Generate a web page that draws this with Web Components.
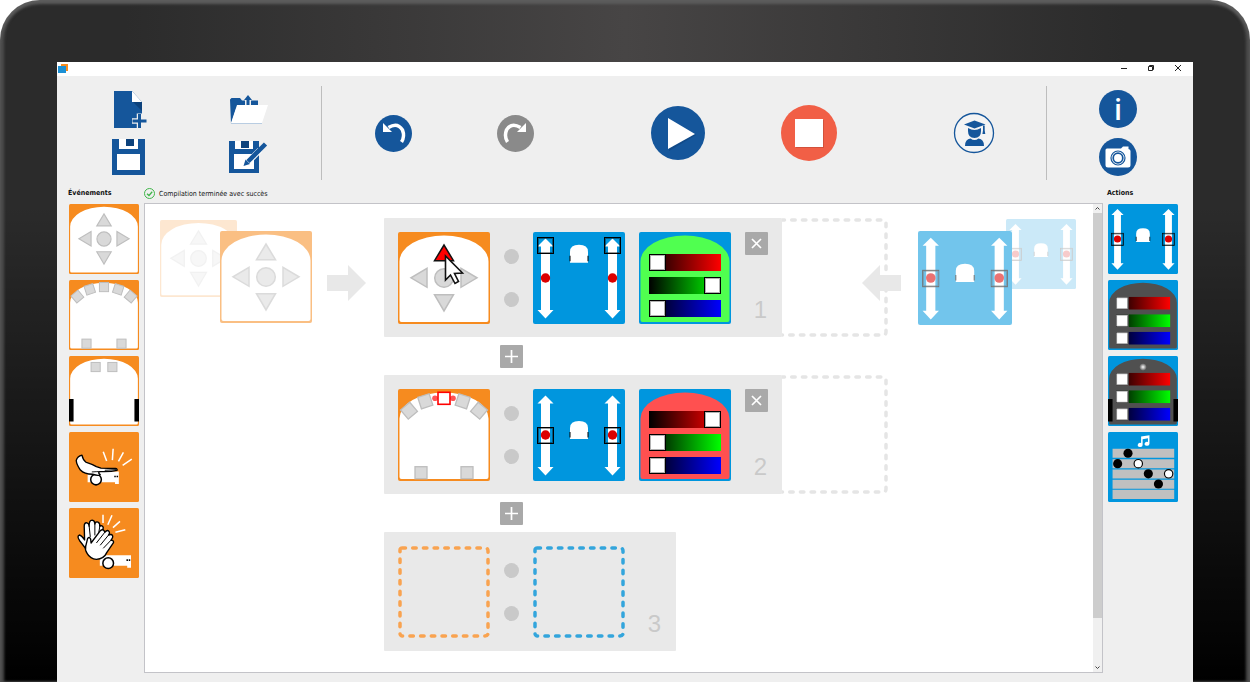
<!DOCTYPE html>
<html lang="fr">
<head>
<meta charset="utf-8">
<title>Thymio VPL</title>
<style>
  body {
    margin: 0;
    background: #fff;
    color: #111;
    font-family: "DejaVu Sans Condensed", "DejaVu Sans", sans-serif;
  }
</style>
</head>
<body>

<vpl-device>
  <vpl-window>
    <vpl-toolbar slot="toolbar">
      <vpl-tool slot="files" icon="new" label="Nouveau"></vpl-tool>
      <vpl-tool slot="files" icon="open" label="Ouvrir"></vpl-tool>
      <vpl-tool slot="files" icon="save" label="Enregistrer"></vpl-tool>
      <vpl-tool slot="files" icon="saveas" label="Enregistrer sous"></vpl-tool>
      <vpl-tool slot="history" icon="undo" label="Annuler"></vpl-tool>
      <vpl-tool slot="history" icon="redo" label="Rétablir"></vpl-tool>
      <vpl-tool slot="run" icon="play" label="Lancer"></vpl-tool>
      <vpl-tool slot="run" icon="stop" label="Arrêter"></vpl-tool>
      <vpl-tool slot="mode" icon="advanced" label="Mode avancé"></vpl-tool>
      <vpl-tool slot="help" icon="info" label="Aide"></vpl-tool>
      <vpl-tool slot="help" icon="camera" label="Capture"></vpl-tool>
    </vpl-toolbar>

    <vpl-palette slot="events" heading="Événements">
      <vpl-block type="buttons"></vpl-block>
      <vpl-block type="prox"></vpl-block>
      <vpl-block type="ground"></vpl-block>
      <vpl-block type="tap"></vpl-block>
      <vpl-block type="clap"></vpl-block>
    </vpl-palette>

    <vpl-status slot="status">Compilation terminée avec succès</vpl-status>

    <vpl-canvas slot="canvas">
      <vpl-hint slot="before">
        <vpl-block type="buttons" class="far"></vpl-block>
        <vpl-block type="buttons" class="near"></vpl-block>
      </vpl-hint>

      <vpl-rule number="1" extend>
        <vpl-block slot="event" type="buttons" active pointer></vpl-block>
        <vpl-block slot="action" type="motors" speed="100"></vpl-block>
        <vpl-block slot="action" type="color" rgb="0,100,0" fill="#50ff50"></vpl-block>
      </vpl-rule>
      <vpl-add></vpl-add>
      <vpl-rule number="2" extend>
        <vpl-block slot="event" type="prox" active></vpl-block>
        <vpl-block slot="action" type="motors"></vpl-block>
        <vpl-block slot="action" type="color" rgb="100,0,0" fill="#ff5050"></vpl-block>
      </vpl-rule>
      <vpl-add></vpl-add>
      <vpl-rule number="3"></vpl-rule>

      <vpl-hint slot="after" reverse>
        <vpl-block type="motors" class="near"></vpl-block>
        <vpl-block type="motors" class="far"></vpl-block>
      </vpl-hint>
    </vpl-canvas>

    <vpl-palette slot="actions" heading="Actions" class="right">
      <vpl-block type="motors"></vpl-block>
      <vpl-block type="color"></vpl-block>
      <vpl-block type="colorbottom"></vpl-block>
      <vpl-block type="music"></vpl-block>
    </vpl-palette>
  </vpl-window>
</vpl-device>

<script>
const BLUE = '#15569b'
const ORANGE = '#f68b1f'
const SKY = '#0096de'

/* ---------- small drawing helpers, all on a 92 x 92 grid ---------- */

const ARCH = 'M1.5 29.5A44.5 26 0 0 1 90.5 29.5V88a2 2 0 0 1-2 2H3.5a2 2 0 0 1-2-2Z'
const base = (bg, body) => `<rect width="92" height="92" rx="2" fill="${bg}"/>${body ? `<path d="${ARCH}" fill="${body}"/>` : ''}`
const box = (x, y, turn = 0) => `<rect x="-6" y="-6" width="12" height="12" transform="translate(${x} ${y}) rotate(${turn})"/>`
const wheels = '<path d="M0 56.5h6V86H0ZM86 56.5h6V86h-6Z" fill="#000"/>'
const lines = d => `<path d="${d}" stroke="#fff" stroke-width="2" fill="none"/>`
const robot = (x, y) => `<g transform="translate(${x} ${y})">
  <path d="M0 0H41V16.500H36V14H0Z" fill="#fff"/>
  <path d="M35 5.500h2v2h-2zM38 5.500h2v2h-2z"/>
  <circle cx="11" cy="10.500" r="7" fill="#fff" stroke="#000" stroke-width="2"/></g>`

const slider = (name, value, from, y) => `
  <foreignObject x="10" y="${y}" width="72" height="17">
    <input type="range" aria-label="${name}" value="${value}" style="--tint:${from}">
  </foreignObject>`
const sliders = rgb => slider('Rouge', rgb[0], '#f00', 21.5) + slider('Vert', rgb[1], '#0f0', 44.5) + slider('Bleu', rgb[2], '#00f', 67.5)

const motorArrow = x => `<path transform="translate(${x} 0)" fill="#fff" d="M0 6.500L8 14.500H4.500V78H8L0 86.500L-8 78H-4.500V14.500H-8Z"/>
  <circle cx="${x}" cy="46" r="4.700" fill="#dc0000"/>`
const motorSlider = (name, x, value) => `
  <foreignObject x="${x}" y="5" width="17" height="82">
    <input type="range" class="vertical" aria-label="${name}" min="-100" max="100" value="${value}">
  </foreignObject>`

const drawings = {
  buttons: el => base(ORANGE, '#fff') + `
    <g fill="#d9d9d9" stroke="#bebebe" stroke-width="1.500">
      <path d="M36.500 62.700h19L46 79Z"/>
      <path d="M29 36.300v19L13 45.800Z"/>
      <path d="M63 36.300v19L79 45.800Z"/>
      <circle cx="46" cy="46" r="9.300"/>
      <path d="M36.500 28.700h19L46 13Z" ${el.hasAttribute('active') ? 'fill="#f00" stroke="#111"' : ''}/>
    </g>`,

  prox: el => base(ORANGE, '#fff') + `
    <g fill="#d9d9d9" stroke="#bebebe" stroke-width="1.300">
      ${box(11, 21.7, -40)}${box(27.3, 12.3, -18)}${box(64.7, 12.3, 18)}${box(81, 21.7, 40)}
      ${box(23, 83.7)}${box(69, 83.7)}
      ${el.hasAttribute('active')
        ? `<g fill="#f55" stroke="none"><circle cx="37" cy="9.300" r="2.800"/><circle cx="55" cy="9.300" r="2.800"/></g><g fill="#fff" stroke="#f00" stroke-width="1.600">${box(46, 9.3)}</g>`
        : box(46, 9.3)}
    </g>`,

  ground: () => base(ORANGE, '#fff') + `
    <g fill="#d9d9d9" stroke="#bebebe" stroke-width="1.300">${box(35, 14.5)}${box(57, 14.5)}</g>` + wheels,

  tap: () => base(ORANGE) + robot(24.5, 52) +
    lines('M45 26L49.500 38M58 22L57 37M71.500 26.700L65 38.500M82.500 35.500L70.500 44') + `
    <path fill="#fff" stroke="#000" stroke-width="1.800" stroke-linejoin="round"
      d="M17 30.500Q18.500 37 22 39.500Q30 42 36 45.500L42 47.500L61 48Q64 48.500 63 50.500Q55 52.500 41 52Q37 53 41 56Q39 58 31 55.500Q20 55.500 15 50Q10 43 9.500 37.500Q11 32 17 30.500Z"/>
    <path fill="none" stroke="#000" stroke-width="1.200" d="M47 50.300L62 49.500M30 52.500Q36 52 41 52"/>`,

  clap: () => base(ORANGE) + robot(40.5, 62) +
    lines('M44.700 9V19.700M56.500 9.600L51 22M67 17.500L57.800 25.800M74 28.500L61 32') + `
    <g fill="#fff" stroke="#000" stroke-width="1.800" stroke-linejoin="round">
      <path d="M24 56L14 43Q10 37 13.500 35.500Q16.500 36 20.500 42L20 24Q20 19 23.500 19.500Q26 20 26.500 24Q26 16 30.500 16Q34 16.500 34 21Q35 17.500 38 18.500Q41 20 40.500 24Q44 22 45 25.500L43 40L34 56Z"/>
      <path d="M26.500 24L28 38M34 21V36M40.500 24L39 33" stroke-width="1.300"/>
      <path d="M22 50L24.500 40Q27 37 28.500 41L29 46L41 30Q44.500 27 46.500 30.500L47 32Q51 27.500 53 31.500Q54 33 52 35.500Q56.500 33.500 57.500 37Q58 39 55 42.500Q59 42 58.500 45.500L50 58Q46 67 36 67.500Q28 67 24 60Q20.500 55 22 50Z"/>
      <path d="M47 32L36 46M52 35.500L41 49M55 42.500L45 53" stroke-width="1.300"/>
    </g>`,

  motors: el => {
    const speed = Number(el.getAttribute('speed') || 0)
    return base(SKY) + motorArrow(12.5) + motorArrow(79.5) + `
      <g transform="translate(37 ${speed > 0 ? 12.7 : 32})">
        <path d="M0 18V7Q0 0 9 0T18 7V18Z" fill="#fff"/>
        <path d="M-0.500 11h1v5.500h-1zM17.500 11h1v5.500h-1z"/>
      </g>` + motorSlider('Moteur gauche', 4, speed) + motorSlider('Moteur droit', 71, speed)
  },

  color: el => base(SKY, el.getAttribute('fill') || '#505050') +
    sliders((el.getAttribute('rgb') || '0,0,0').split(',')),

  colorbottom: () => `
    <defs><radialGradient id="led"><stop offset=".2" stop-color="#ddd"/><stop offset="1" stop-color="#505050"/></radialGradient></defs>` +
    base(SKY, '#505050') + wheels + '<circle cx="46" cy="14.500" r="5" fill="url(#led)"/>' + sliders([0, 0, 0]),

  music: () => base(SKY) + `
    <path fill="#c0c0c0" d="M6 22h81v12H6zM6 35.700h81v12H6zM6 49.200h81v12H6zM6 62.600h81v12H6zM6 76h81v12H6z"/>
    <path fill="#fff" d="M43.500 6L54.500 4.300V15.500a3.200 2.700 0 1 1-2-2.500V8.300L45.500 9.400V17a3.200 2.700 0 1 1-2-2.500Z"/>
    <circle cx="26.300" cy="28" r="6"/><circle cx="12.700" cy="41.600" r="6"/>
    <circle cx="53" cy="55" r="6"/><circle cx="66.300" cy="68.300" r="6"/>
    <g fill="#fff" stroke="#000" stroke-width="1.500"><circle cx="39.800" cy="41.600" r="5.500"/><circle cx="79.700" cy="55" r="5.500"/></g>`
}

const names = {
  buttons: 'Boutons', prox: 'Capteurs de proximité', ground: 'Capteurs de sol', tap: 'Choc', clap: 'Clap',
  motors: 'Moteurs', color: 'Couleur du haut', colorbottom: 'Couleur du bas', music: 'Musique'
}

customElements.define('vpl-block', class extends HTMLElement {
  connectedCallback() {
    const type = this.getAttribute('type')
    const root = this.attachShadow({mode: 'open'})
    root.innerHTML = `
    <style>
      :host { display: block; position: relative; width: var(--block, 92px); height: var(--block, 92px); background: var(--block-back, none); }
      svg.block { display: block; width: 100%; height: 100%; opacity: var(--block-opacity, 1); }
      input {
        appearance: none;
        display: block;
        margin: 0;
        width: 72px;
        height: 17px;
        background: linear-gradient(to right, #000, var(--tint));
      }
      input::-webkit-slider-thumb {
        appearance: none;
        box-sizing: border-box;
        width: 17px;
        height: 17px;
        background: #fff;
        border: 1px solid #000;
        box-shadow: inset 0 0 0 1px rgba(0, 0, 0, .3);
      }
      input.vertical {
        writing-mode: vertical-lr;
        direction: rtl;
        width: 17px;
        height: 82px;
        background: none;
      }
      input.vertical::-webkit-slider-thumb { background: none; box-shadow: inset 0 0 0 1px rgba(0, 0, 0, .4); }
      .pointer { position: absolute; left: 50%; top: 22px; width: 22px; height: 32px; }
    </style>
    <svg class="block" viewBox="0 0 92 92" role="group" aria-label="${names[type]}">${drawings[type](this)}</svg>
    ${this.hasAttribute('pointer') ? `
    <svg class="pointer" viewBox="0 0 22 32" aria-hidden="true">
      <path d="M1.500 2V26L6.500 21L11 29.500L14.500 27.500L10.500 19.500L18.500 19Z" fill="#fff" stroke="#111" stroke-width="1.600"/>
    </svg>` : ''}`
  }
})

/* ---------- toolbar ---------- */

const disc = (r, fill) => `<circle cx="${r}" cy="${r}" r="${r}" fill="${fill}"/>`
const icons = {
  new: [36, 38, `<path fill="${BLUE}" d="M3 0H21L31 11V37H3Z"/><path fill="#fff" d="M21 0V11H31Z"/><path fill="#0d427c" d="M22 11H31V20Z"/>
    <path d="M28.500 22.500V37M21 30H36" stroke="#efefef" stroke-width="5.500"/><path d="M28.500 23V37M21.500 30H35.500" stroke="${BLUE}" stroke-width="3"/>`],
  open: [38, 30, `<path fill="${BLUE}" d="M0 4.500L1.500 3H10L12 5.500H28V14H6L1 29Z"/>
    <path d="M18 3V11" stroke="#efefef" stroke-width="6"/><path fill="${BLUE}" d="M18 0L22 5H19.500V11H16.500V5H14Z"/>
    <path fill="#fff" d="M7 10H38L32 28H1Z"/><path d="M1 28.500H32" stroke="#b9cde2"/>`],
  save: [34, 36, `<path fill="${BLUE}" d="M0 0H33V36H0Z"/><path fill="#fff" d="M7 0H26V10H7ZM5 15H28V31H5Z"/><path fill="#0d427c" d="M14 0H22V7H14Z"/>`],
  saveas: [40, 34, `<path fill="${BLUE}" d="M0 1H30V33H0Z"/><path fill="#fff" d="M6 1H24V9H6ZM5 14H25V29H5Z"/><path fill="#0d427c" d="M12 1H20V8H12Z"/>
    <path d="M20 21L31 10" stroke="#fff" stroke-width="6"/><path d="M19 21.500L36.500 4" stroke="${BLUE}" stroke-width="4.500"/><path fill="${BLUE}" d="M14.500 26L16.500 19.500L21 24Z"/>`],
  undo: [37, 37, disc(18.5, BLUE) + `<path d="M26.500 27Q30 21.500 27.500 15Q22.500 7 13.500 12.500" fill="none" stroke="#fff" stroke-width="3.500"/><path fill="#fff" d="M8 8V17H17Z"/>`],
  redo: [37, 37, disc(18.5, '#8a8a8a') + `<path d="M10.500 27Q7 21.500 9.500 15Q14.500 7 23.500 12.500" fill="none" stroke="#fff" stroke-width="3.500"/><path fill="#fff" d="M29 8V17H20Z"/>`],
  play: [54, 54, disc(27, BLUE) + `<path fill="#114a88" d="M18 14L45 29L18 45Z"/><path fill="#fff" d="M17 12V43L44 28Z"/>`],
  stop: [56, 56, disc(28, '#f15f46') + `<path fill="#d2513b" d="M15 15h28v28H15z"/><path fill="#fff" d="M14 14h28v28H14z"/>`],
  advanced: [42, 42, `<circle cx="21" cy="21" r="19.500" fill="#f4f4f4" stroke="${BLUE}" stroke-width="1.300"/>
    <g fill="${BLUE}"><path d="M11 12.500L21.500 8.500L32.500 12.500L21.500 16.500Z"/><path d="M15 16Q21.500 20 28 16V19Q28 26 21.500 26T15 19Z"/>
    <path d="M30 13.500h1.700v5l.6 3.500h-2.900l.6-3.500z"/><path d="M12 34Q12 27 17.500 26.500Q21.500 29.500 25.500 26.500Q31 27 31 34Z"/></g>`],
  info: [38, 38, disc(19, BLUE) + '<text x="19" y="30" text-anchor="middle" fill="#fff" font-size="29" font-weight="600" font-family="Open Sans, Noto Sans, sans-serif">i</text>'],
  camera: [38, 38, disc(19, BLUE) + `<path fill="#fff" d="M8 10.500H22L24 8.500H29.500V11Q31.500 11.500 31.500 13V27Q31.500 29.500 29 29.500H9Q6.500 29.500 6.500 27V12Q6.500 10.500 8 10.500Z"/>
    <g fill="none" stroke="${BLUE}"><circle cx="19" cy="20" r="7" stroke-width="1.200"/><circle cx="19" cy="20" r="4.800" stroke-width="1.700"/></g>`]
}

customElements.define('vpl-tool', class extends HTMLElement {
  connectedCallback() {
    const [w, h, body] = icons[this.getAttribute('icon')]
    const root = this.attachShadow({mode: 'open'})
    root.innerHTML = `
    <style>
      :host { display: block; }
      button { display: block; padding: 0; border: 0; background: none; cursor: pointer; }
      svg { display: block; }
    </style>
    <button type="button" aria-label="${this.getAttribute('label')}">
      <svg width="${w}" height="${h}" viewBox="0 0 ${w} ${h}">${body}</svg>
    </button>`
  }
})

customElements.define('vpl-toolbar', class extends HTMLElement {
  connectedCallback() {
    const root = this.attachShadow({mode: 'open'})
    root.innerHTML = `
    <style>
      :host { display: flex; padding: 10px 0 7px; }
      .files {
        box-sizing: border-box;
        display: grid;
        grid-template-columns: 1fr 1fr;
        grid-auto-rows: 47px;
        place-items: center;
        width: 265px;
        padding: 0 12px;
        border-right: 1px solid #bdbdbd;
      }
      .main {
        flex: 1;
        display: flex;
        align-items: center;
        justify-content: space-between;
        padding: 0 51px 0 53px;
      }
      .group { display: flex; align-items: center; }
      .history { gap: 85px; }
      .run { gap: 76px; }
      .help {
        box-sizing: border-box;
        display: flex;
        flex-direction: column;
        align-items: center;
        justify-content: center;
        gap: 10px;
        width: 147px;
        padding-right: 4px;
        border-left: 1px solid #bdbdbd;
      }
    </style>
    <div class="files"><slot name="files"></slot></div>
    <div class="main">
      <div class="group history"><slot name="history"></slot></div>
      <div class="group run"><slot name="run"></slot></div>
      <slot name="mode"></slot>
    </div>
    <div class="help"><slot name="help"></slot></div>`
  }
})

/* ---------- palettes and status line ---------- */

customElements.define('vpl-palette', class extends HTMLElement {
  connectedCallback() {
    const root = this.attachShadow({mode: 'open'})
    root.innerHTML = `
    <style>
      :host { display: block; padding: 0 5px 0 12px; }
      :host(.right) { padding: 0 15px 0 5px; }
      h2 { margin: 0 0 0 -1px; font-size: 7px; line-height: 12px; height: 17px; font-weight: 700; }
      .list { display: flex; flex-direction: column; gap: 6px; --block: 70px; }
    </style>
    <h2>${this.getAttribute('heading')}</h2>
    <div class="list"><slot></slot></div>`
  }
})

customElements.define('vpl-status', class extends HTMLElement {
  connectedCallback() {
    const root = this.attachShadow({mode: 'open'})
    root.innerHTML = `
    <style>
      :host { display: flex; align-items: center; gap: 4px; height: 13px; font-size: 7px; line-height: 12px; padding-bottom: 3px; }
    </style>
    <svg width="11" height="11" viewBox="0 0 11 11" aria-hidden="true">
      <g fill="none" stroke="#3fb549"><circle cx="5.500" cy="5.500" r="5"/><path d="M3 5.700L5 7.500L8.200 3.800" stroke-width="1.300"/></g>
    </svg>
    <span><slot></slot></span>`
  }
})

/* ---------- program area ---------- */

const dashed = (color, d) => `<path d="${d}" fill="none" stroke="${color}" stroke-width="3.500" stroke-linecap="round" stroke-dasharray="3.500 7.200"/>`

customElements.define('vpl-rule', class extends HTMLElement {
  connectedCallback() {
    const empty = !this.children.length
    const slotBox = color => `<svg width="92" height="92" viewBox="0 0 92 92">${dashed(color, 'M4 2H87Q90 2 90 5V87Q90 90 87 90H5Q2 90 2 87V4Q2 2 4 2')}</svg>`
    const root = this.attachShadow({mode: 'open'})
    root.innerHTML = `
    <style>
      :host { display: flex; }
      .rule { display: flex; gap: 14px; padding: 14px 14px 13px; background: #e9e9e9; border-radius: 1px; }
      .dots { display: flex; flex-direction: column; justify-content: center; gap: 28px; }
      .dots i { width: 15px; height: 15px; border-radius: 50%; background: #c9c9c9; }
      .end { display: flex; flex-direction: column; justify-content: space-between; align-items: center; width: 23px; }
      button { display: block; width: 23px; height: 23px; padding: 0; border: 0; border-radius: 1px; background: #a9a9a9; }
      svg { display: block; }
      .number { margin-top: auto; font: 24px/28px "Liberation Sans", Arial, sans-serif; color: #c9c9c9; padding-left: 8px; }
    </style>
    <div class="rule">
      <slot name="event">${slotBox('#f9a350')}</slot>
      <div class="dots"><i></i><i></i></div>
      <slot name="action">${slotBox('#33a5dc')}</slot>
      <div class="end">
        ${empty ? '' : `<button type="button" aria-label="Supprimer"><svg width="23" height="23" viewBox="0 0 23 23"><path d="M7 7L16 16M16 7L7 16" stroke="#fff" stroke-width="1.700"/></svg></button>`}
        <span class="number">${this.getAttribute('number')}</span>
      </div>
    </div>
    ${this.hasAttribute('extend') ? `<svg width="106" height="119" viewBox="0 0 106 119">${dashed('#e5e5e5', 'M-1 2H101Q104 2 104 5V114Q104 117 101 117H0')}</svg>` : ''}`
  }
})

customElements.define('vpl-add', class extends HTMLElement {
  connectedCallback() {
    const root = this.attachShadow({mode: 'open'})
    root.innerHTML = `
    <style>
      :host { display: block; padding: 8px 0 7px 116px; }
      button { display: block; width: 23px; height: 23px; padding: 0; border: 0; border-radius: 1px; background: #a9a9a9; }
      svg { display: block; }
    </style>
    <button type="button" aria-label="Ajouter une règle">
      <svg width="23" height="23" viewBox="0 0 23 23"><path d="M11.500 5V18M5 11.500H18" stroke="#fff" stroke-width="1.700"/></svg>
    </button>`
  }
})

customElements.define('vpl-hint', class extends HTMLElement {
  connectedCallback() {
    const root = this.attachShadow({mode: 'open'})
    root.innerHTML = `
    <style>
      :host { display: flex; align-items: flex-start; }
      :host([reverse]) { flex-direction: row-reverse; }
      .stack { display: flex; align-items: flex-start; }
      .arrow { display: block; position: relative; margin: 47px 18px 0 15px; }
      :host([reverse]) .arrow { transform: scaleX(-1); margin: 47px 17px 0 -26px; }
      ::slotted(*) { --block-back: #fff; }
      ::slotted(.far) { --block: 77px; --block-opacity: .2; margin-top: 2px; }
      ::slotted(.near) { --block-opacity: .55; margin: 13px 0 0 -17px; z-index: 1; }
      :host([reverse]) ::slotted(.far) { --block: 70px; margin: 1px 0 0 -6px; }
      :host([reverse]) ::slotted(.near) { --block: 94px; margin: 13px 0 0; }
    </style>
    <div class="stack"><slot></slot></div>
    <svg class="arrow" width="39" height="36" viewBox="0 0 39 36" aria-hidden="true"><path d="M0 10H21V0L39 18L21 36V26H0Z" fill="#e8e8e8"/></svg>`
  }
})

customElements.define('vpl-canvas', class extends HTMLElement {
  connectedCallback() {
    const root = this.attachShadow({mode: 'open'})
    root.innerHTML = `
    <style>
      :host { display: flex; background: #fff; border: 1px solid #c3c3c8; }
      .sheet { flex: 1; display: flex; justify-content: center; align-items: flex-start; padding: 14px 2px 0 0; }
      .bar { display: flex; flex-direction: column; width: 9px; background: #f0f0f0; }
      .bar button { display: block; padding: 0; border: 0; background: none; height: 9px; }
      .bar svg { display: block; }
      .track { flex: 1; }
      .thumb { height: 90%; background: #cdcdcd; }
    </style>
    <div class="sheet">
      <slot name="before"></slot>
      <div class="rules"><slot></slot></div>
      <slot name="after"></slot>
    </div>
    <div class="bar">
      <button type="button" aria-label="Défiler vers le haut"><svg width="9" height="9" viewBox="0 0 9 9"><path d="M2.500 5.500L4.500 3.500L6.500 5.500" fill="none" stroke="#444"/></svg></button>
      <div class="track"><div class="thumb"></div></div>
      <button type="button" aria-label="Défiler vers le bas"><svg width="9" height="9" viewBox="0 0 9 9"><path d="M2.500 3.500L4.500 5.500L6.500 3.500" fill="none" stroke="#444"/></svg></button>
    </div>`
  }
})

/* ---------- window and tablet ---------- */

customElements.define('vpl-window', class extends HTMLElement {
  connectedCallback() {
    const root = this.attachShadow({mode: 'open'})
    root.innerHTML = `
    <style>
      :host { flex: 1; display: flex; flex-direction: column; background: #efefef; }
      header { display: flex; align-items: center; height: 14px; background: #fff; padding: 0 8px 0 1px; }
      header svg { display: block; }
      nav { margin-left: auto; display: flex; gap: 13px; }
      nav button { display: block; padding: 0; border: 0; background: none; width: 14px; height: 12px; }
      .body {
        flex: 1;
        display: grid;
        grid-template-columns: 87px 1fr 90px;
        grid-template-rows: 1fr;
      }
      .center { display: flex; flex-direction: column; }
      ::slotted(vpl-canvas) { flex: 1; margin-bottom: 9px; }
    </style>
    <header>
      <svg width="11" height="11" viewBox="0 0 11 11" aria-hidden="true"><path fill="${ORANGE}" d="M3 0h7v7H3z"/><path fill="#1c90d4" d="M0 2h8v7H0z"/></svg>
      <nav>
        <button type="button" aria-label="Réduire"><svg width="14" height="12" viewBox="0 0 14 12"><path d="M4 5.500H10" stroke="#222"/></svg></button>
        <button type="button" aria-label="Restaurer"><svg width="14" height="12" viewBox="0 0 14 12"><path d="M4.500 3.500H8.500V7.500H4.500ZM5.500 3.500V2.500H9.500V6.500H8.500" fill="none" stroke="#222"/></svg></button>
        <button type="button" aria-label="Fermer"><svg width="14" height="12" viewBox="0 0 14 12"><path d="M4 2L10 8M10 2L4 8" stroke="#222"/></svg></button>
      </nav>
    </header>
    <slot name="toolbar"></slot>
    <div class="body">
      <slot name="events"></slot>
      <div class="center">
        <slot name="status"></slot>
        <slot name="canvas"></slot>
      </div>
      <slot name="actions"></slot>
    </div>`
  }
})

customElements.define('vpl-device', class extends HTMLElement {
  connectedCallback() {
    const root = this.attachShadow({mode: 'open'})
    root.innerHTML = `
    <style>
      :host {
        box-sizing: border-box;
        display: flex;
        min-height: 100vh;
        padding: 62px 57px 0;
        border-radius: 40px 40px 0 0;
        background:
          linear-gradient(to bottom, transparent 30%, #000 100%),
          linear-gradient(to right, #2b2b2b 10%, #474545 50%, #2b2b2b 90%);
        box-shadow: inset 0 4px 3px #5c5c5c, inset 4px 0 3px #4c4c4c, inset -4px 0 3px #4c4c4c;
      }
    </style>
    <slot></slot>`
  }
})
</script>
</body>
</html>
